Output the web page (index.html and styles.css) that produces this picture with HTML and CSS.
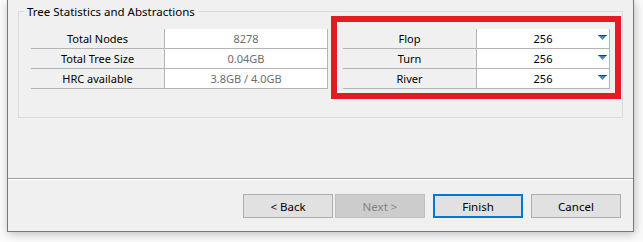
FILE: index.html
```html
<!DOCTYPE html>
<html lang="en">
<head>
    <meta charset="UTF-8">
    <meta name="viewport" content="width=device-width, initial-scale=1.0">
    <title>Tree Statistics</title>
    <link rel="stylesheet" href="styles.css">
</head>
<body>

<div class="window">
    <div class="page">
        <div class="group">
            <div class="group-title">Tree Statistics and Abstractions</div>
            <div class="tables">
                <div class="grid stats">
                    <div class="label">Total Nodes</div><div class="value muted">8278</div>
                    <div class="label">Total Tree Size</div><div class="value muted">0.04GB</div>
                    <div class="label">HRC available</div><div class="value muted">3.8GB / 4.0GB</div>
                </div>
                <div class="grid streets">
                    <div class="label">Flop</div><div class="value combo">256<span class="arrow"></span></div>
                    <div class="label">Turn</div><div class="value combo">256<span class="arrow"></span></div>
                    <div class="label">River</div><div class="value combo">256<span class="arrow"></span></div>
                </div>
            </div>
            <div class="highlight"></div>
        </div>
    </div>
    <div class="separator"></div>
    <div class="buttons">
        <button class="btn">&lt; Back</button>
        <button class="btn next" disabled>Next &gt;</button>
        <button class="btn default">Finish</button>
        <button class="btn">Cancel</button>
    </div>
</div>

</body>
</html>
```

FILE: styles.css
```css
body {
    margin: 0;
    background: #fbfbfb;
    font-family: "Noto Sans", sans-serif;
    font-size: 11px;
    color: #000;
    width: 643px;
    height: 242px;
    overflow: hidden;
}
.window {
    margin-left: 7px;
    width: 627px;
    height: 232px;
    box-sizing: border-box;
    background: #f0f0f0;
    border: 1px solid #777;
    border-top: none;
    box-shadow: 1px 2px 9px rgba(0,0,0,0.25);
}
.page {
    height: 178px;
    padding-top: 11px;
    box-sizing: border-box;
}
.group {
    position: relative;
    margin: 0 10px;
    height: 107px;
    box-sizing: border-box;
    border: 1px solid #dcdcdc;
    padding: 0 12px;
}
.group-title {
    width: fit-content;
    margin: -8px 0 0 -7px;
    padding: 0 3px;
    height: 16px;
    line-height: 16px;
    background: #f0f0f0;
    font-size: 11.5px;
}
.tables {
    display: flex;
    gap: 15px;
    margin-top: 9px;
}
.grid { display: grid; }
.stats { grid-template-columns: 134px 163px; }
.streets { grid-template-columns: 134px 133px; }
.label, .value {
    height: 19px;
    line-height: 20px;
    text-align: center;
    border-bottom: 1px solid #b4b4b4;
    border-right: 1px solid #b4b4b4;
}
.value { background: #fff; }
.muted { color: #6d6d6d; }
.combo { position: relative; }
.arrow {
    position: absolute;
    right: 2px;
    top: 6px;
    width: 9px;
    height: 5px;
    background: #3d86c6;
    border-top: 1px solid #1f3f73;
    box-sizing: border-box;
    clip-path: polygon(0 0, 100% 0, 50% 100%);
}
.highlight {
    position: absolute;
    left: 312px;
    top: 4px;
    width: 290px;
    height: 83px;
    box-sizing: border-box;
    border: 6px solid #e21b25;
}
.separator {
    border-top: 1px solid #a0a0a0;
    border-bottom: 1px solid #fff;
}
.buttons {
    display: flex;
    justify-content: flex-end;
    padding: 14px 12px 0 0;
}
.btn {
    width: 90px;
    height: 24px;
    margin-left: 8px;
    font-family: inherit;
    font-size: 11.5px;
    color: #000;
    background: #e1e1e1;
    border: 1px solid #adadad;
    padding: 0;
}
.next {
    margin-left: 2px;
    background: #cccccc;
    border-color: #bfbfbf;
    color: #838383;
}
.default { border: 2px solid #0078d7; }
```
